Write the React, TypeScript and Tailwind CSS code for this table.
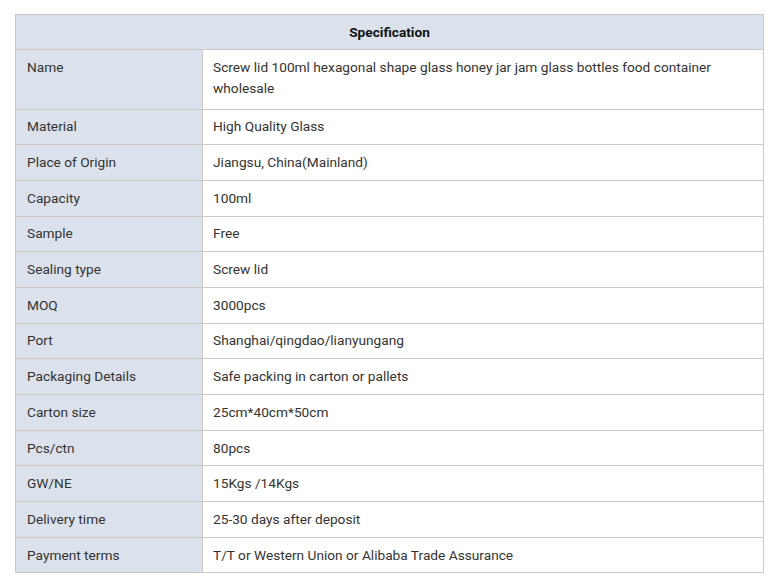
const rows: [string, string][] = [
  ["Name", "Screw lid 100ml hexagonal shape glass honey jar jam glass bottles food container wholesale"],
  ["Material", "High Quality Glass"],
  ["Place of Origin", "Jiangsu, China(Mainland)"],
  ["Capacity", "100ml"],
  ["Sample", "Free"],
  ["Sealing type", "Screw lid"],
  ["MOQ", "3000pcs"],
  ["Port", "Shanghai/qingdao/lianyungang"],
  ["Packaging Details", "Safe packing in carton or pallets"],
  ["Carton size", "25cm*40cm*50cm"],
  ["Pcs/ctn", "80pcs"],
  ["GW/NE", "15Kgs /14Kgs"],
  ["Delivery time", "25-30 days after deposit"],
  ["Payment terms", "T/T or Western Union or Alibaba Trade Assurance"],
]

export default function App() {
  return (
    <div className="min-h-screen bg-white pt-[14px] pl-[15px]" style={{ fontFamily: "Roboto, 'Liberation Sans', sans-serif" }}>
      <table className="w-[749px] border-collapse text-[13.7px] leading-[21px] text-[#333]">
        <thead>
          <tr>
            <th colSpan={2} className="h-[35px] border border-[#c9c9c9] bg-[#dbe2eb] text-center font-bold text-[#111]">
              Specification
            </th>
          </tr>
        </thead>
        <tbody>
          {rows.map(([label, value], i) => (
            <tr key={label}>
              <td className={`w-[187px] border border-[#c9c9c9] bg-[#dbe2eb] px-[11px] align-top ${i === 0 ? "pt-[6.5px] pb-[10px]" : "py-[6.85px]"}`}>
                {label}
              </td>
              <td className={`border border-[#c9c9c9] bg-white px-[10px] align-top ${i === 0 ? "pt-[6.5px] pb-[10px]" : "py-[6.85px]"}`}>
                {value}
              </td>
            </tr>
          ))}
        </tbody>
      </table>
    </div>
  )
}
